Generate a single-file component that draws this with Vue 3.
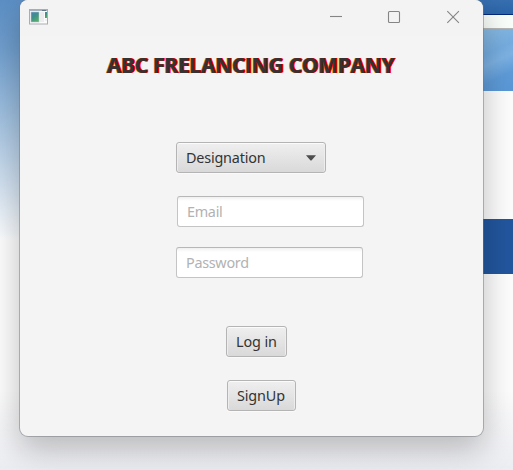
<script setup>
import { ref } from 'vue'

const email = ref('')
const password = ref('')
</script>

<template>
  <div class="desktop">
    <div class="backdrop">
      <div class="sky"></div>
      <div class="page">
        <div class="strip"></div>
        <div class="toolbar"></div>
        <div class="photo"></div>
        <div class="blank"></div>
        <div class="banner"></div>
      </div>
    </div>
    <div class="floor"></div>

    <main class="window">
      <header class="titlebar">
        <svg class="app-icon" width="19" height="16" viewBox="0 0 19 16">
          <defs>
            <linearGradient id="pane" x1="0" y1="0" x2="0.6" y2="1">
              <stop offset="0" stop-color="#4a83b0" />
              <stop offset="0.5" stop-color="#3f8f8c" />
              <stop offset="1" stop-color="#55ac68" />
            </linearGradient>
          </defs>
          <rect x="0.5" y="0.5" width="18" height="14.5" fill="#fbfbfb" stroke="#a9adb2" />
          <path d="M1 1.5H18" stroke="#a7b0bb" />
          <path d="M13 1.5h4" stroke="#64788c" />
          <rect x="2" y="3" width="8" height="10" fill="url(#pane)" stroke="#b4c4d0" stroke-width=".6" />
          <rect x="11" y="3" width="4" height="10" fill="#ececef" />
          <rect x="16" y="3" width="2" height="6" fill="url(#pane)" />
          <path d="M16 11h2" stroke="#e3e5e8" />
        </svg>
        <div class="controls">
          <svg width="13" height="13" viewBox="0 0 13 13"><path d="M1 6.5h12" /></svg>
          <svg width="13" height="13" viewBox="0 0 13 13"><rect x=".5" y="1.5" width="11" height="11" rx="1" /></svg>
          <svg width="13" height="13" viewBox="0 0 13 13"><path d="M.3 1.2l11.6 11.6M11.9 1.2L.3 12.8" /></svg>
        </div>
      </header>

      <form class="content" @submit.prevent>
        <h1>ABC FRELANCING COMPANY</h1>
        <button type="button" class="control combo">
          <span>Designation</span>
          <svg width="10" height="6" viewBox="0 0 10 6"><path d="M0 .3h10L5.7 5.2Q5 5.8 4.3 5.2Z" /></svg>
        </button>
        <input v-model="email" class="field email" type="text" placeholder="Email" />
        <input v-model="password" class="field password" type="password" placeholder="Password" />
        <button type="button" class="control login"><span>Log in</span></button>
        <button type="button" class="control signup"><span>SignUp</span></button>
      </form>
    </main>
  </div>
</template>

<style>
body {
  margin: 0;
  overflow: hidden;
}
</style>

<style scoped>
.desktop {
  position: relative;
  width: 513px;
  height: 470px;
  overflow: hidden;
  background: #fdfdfd;
  font-family: "Noto Sans", "Open Sans", sans-serif;
}
.backdrop {
  display: flex;
  justify-content: space-between;
  height: 470px;
}
.sky {
  width: 60px;
  height: 240px;
  background: linear-gradient(#5c8fc5 0, #719fce 50px, #a3c2e0 120px, #d2e1f0 185px, #fcfdfe 240px);
}
.page {
  display: flex;
  flex-direction: column;
  width: 60px;
}
.strip {
  height: 14px;
  background: linear-gradient(#376fb1, #2b66aa);
  border-bottom: 1px solid #05297b;
}
.toolbar {
  height: 13px;
  background: #fafefa;
  border-bottom: 1px solid #b5b5b5;
}
.photo {
  height: 62px;
  background: linear-gradient(155deg, #94c1e4 0%, #75ade0 45%, #7db2e3 58%, #5e9bd8 78%, #5997d6 100%);
}
.blank {
  height: 128px;
}
.banner {
  height: 55px;
  background: #22569e;
}
.floor {
  position: absolute;
  inset: 390px 0 0;
  background: linear-gradient(rgba(235, 238, 244, 0), #ecedf2);
}
.window {
  position: absolute;
  left: 19px;
  top: -1px;
  box-sizing: border-box;
  width: 465px;
  height: 438px;
  border: 1px solid rgba(115, 120, 125, 0.5);
  border-radius: 9px;
  background: #f4f4f4;
  background-clip: padding-box;
  box-shadow: 0 12px 32px rgba(0, 0, 0, 0.25);
}
.titlebar {
  display: flex;
  justify-content: space-between;
  box-sizing: border-box;
  height: 36px;
  padding: 9px 23px 0 9px;
  border-radius: 8px 8px 0 0;
  background: #f3f3f3;
}
.controls {
  display: flex;
  gap: 46px;
  padding-top: 1px;
}
.controls svg {
  overflow: visible;
  fill: none;
  stroke: #858585;
  stroke-width: 1.1;
}
.content {
  display: flex;
  flex-direction: column;
  align-items: flex-start;
}
h1 {
  margin: 15px 0 0 86.5px;
  font-family: "Open Sans", "Noto Sans", sans-serif;
  font-size: 21px;
  font-weight: 700;
  line-height: 28px;
  letter-spacing: -0.28px;
  white-space: nowrap;
  color: #333;
  text-shadow: 1px 0 0 #f00, 1.5px 0 0 #f00, -0.5px 0 0 #d07a20;
}
.control {
  display: flex;
  align-items: center;
  justify-content: center;
  box-sizing: border-box;
  height: 31px;
  padding: 0 9px;
  border: 1px solid #b4b4b4;
  border-radius: 3px;
  background: linear-gradient(#efefef, #d9d9d9);
  box-shadow: inset 0 1px #fbfbfb, inset 1px 0 #ededed, inset -1px 0 #ededed, 0 1px #fafafa;
  color: #333;
  font: 14.4px/20px "Noto Sans", "Open Sans", sans-serif;
  white-space: nowrap;
}
.combo {
  justify-content: space-between;
  width: 150px;
  margin: 63px 0 0 156px;
}
.combo svg {
  fill: #4d4d4d;
}
.combo span {
  letter-spacing: -0.2px;
}
.field {
  box-sizing: border-box;
  width: 187px;
  height: 31px;
  padding: 0 9px;
  border: 1px solid #c4c4c4;
  border-top-color: #b7b7b7;
  border-radius: 3px;
  outline: 0;
  background: linear-gradient(#f0f0f0, #fff 4px);
  font: 14.4px/20px "Noto Sans", "Open Sans", sans-serif;
  letter-spacing: -0.3px;
}
.field::placeholder {
  color: #b2b2b2;
  opacity: 1;
}
.email {
  margin: 23px 0 0 157px;
}
.password {
  margin: 20px 0 0 156px;
}
.login {
  justify-content: flex-start;
  width: 61px;
  margin: 48px 0 0 206px;
  letter-spacing: -0.1px;
}
.signup {
  justify-content: flex-start;
  width: 69px;
  margin: 23px 0 0 207px;
  letter-spacing: -0.15px;
}
</style>
